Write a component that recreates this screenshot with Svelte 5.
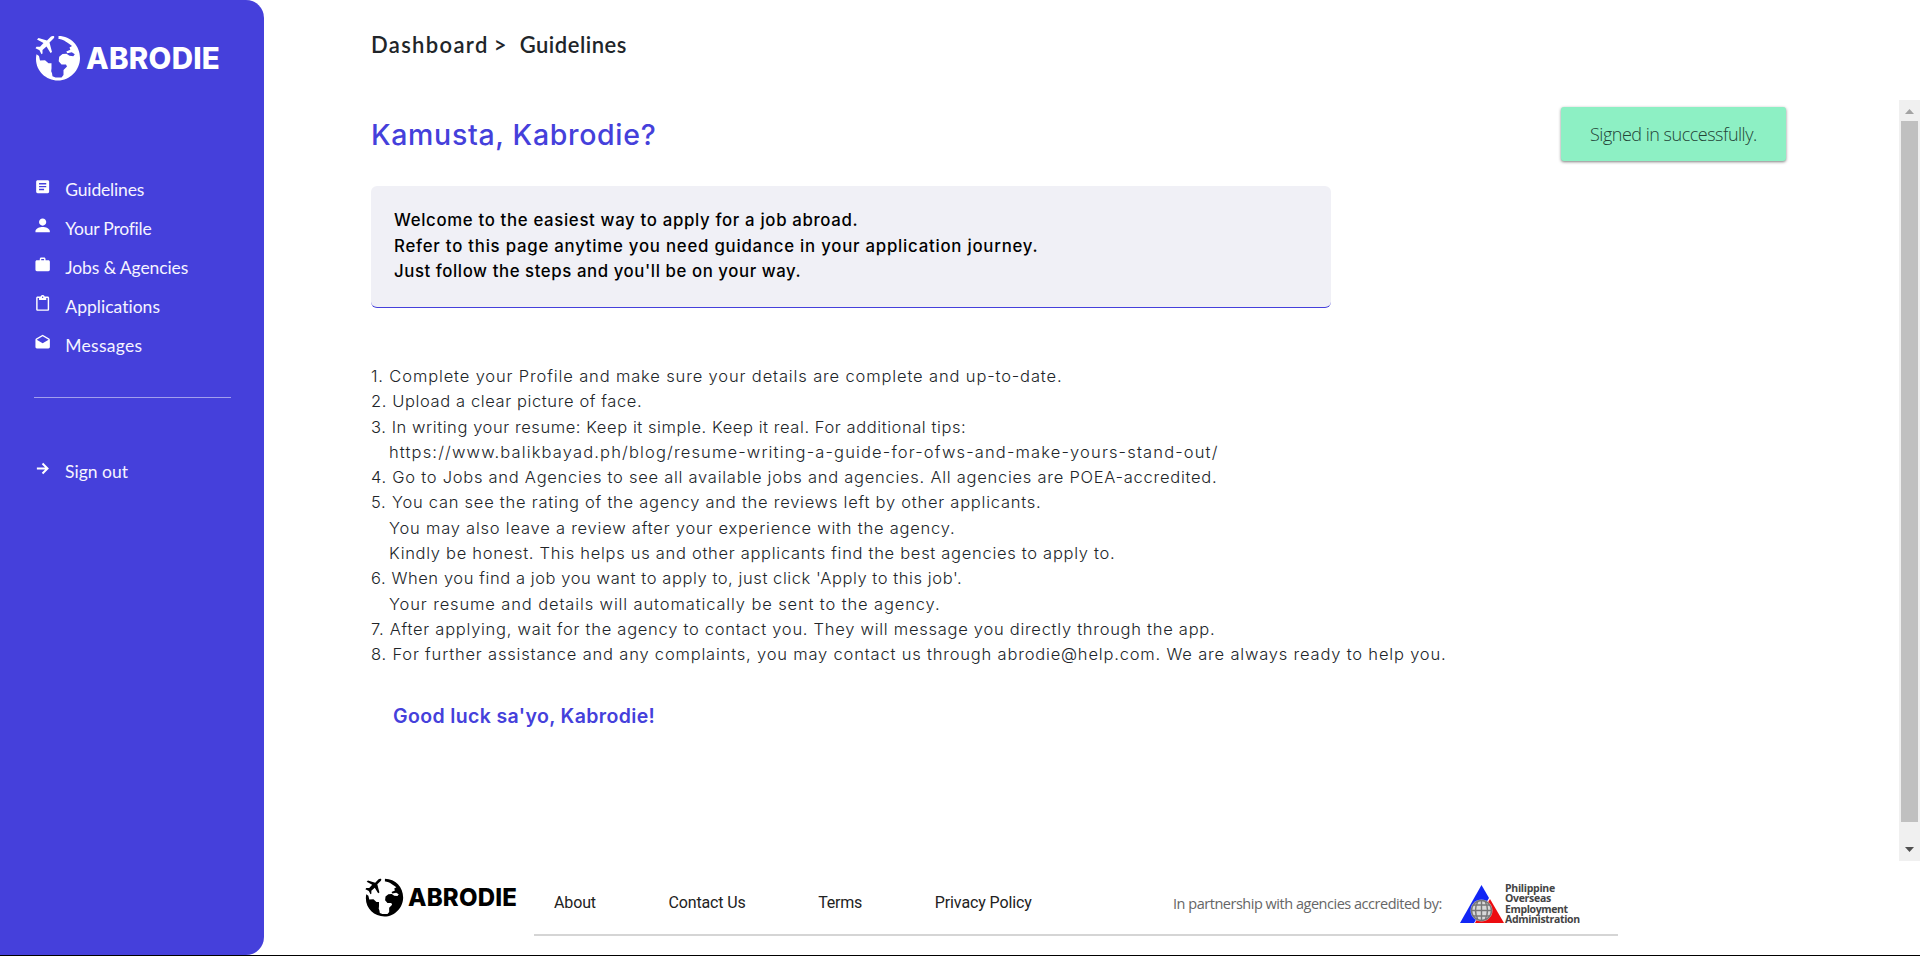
<script>
  const nav = [
    { t: 'Guidelines', w: 79, d: 'M19 3H5c-1.100 0-2 .9-2 2v14c0 1.100.9 2 2 2h14c1.100 0 2-.9 2-2V5c0-1.100-.9-2-2-2zm-5 14H7v-2h7v2zm3-4H7v-2h10v2zm0-4H7V7h10v2z' },
    { t: 'Your Profile', w: 86, d: 'M12 12c2.760 0 5-2.240 5-5s-2.240-5-5-5-5 2.240-5 5 2.240 5 5 5zm0 2c-4 0-10 2-10 6v1h20v-1c0-4-6-6-10-6z' },
    { t: 'Jobs & Agencies', w: 123, d: 'M20 6h-4V4c0-1.110-.89-2-2-2h-4c-1.110 0-2 .89-2 2v2H4c-1.110 0-2 .89-2 2v11c0 1.110.89 2 2 2h16c1.110 0 2-.89 2-2V8c0-1.110-.89-2-2-2zm-6 0h-4V4h4v2z' },
    { t: 'Applications', w: 95, d: 'M19 2h-4.180C14.400.84 13.300 0 12 0S9.600.84 9.180 2H5c-1.100 0-2 .9-2 2v16c0 1.100.9 2 2 2h14c1.100 0 2-.9 2-2V4c0-1.100-.9-2-2-2zm-7 0c.55 0 1 .45 1 1s-.45 1-1 1-1-.45-1-1 .45-1 1-1zm7 18H5V4h2v3h10V4h2v16z' },
    { t: 'Messages', w: 77, d: 'M22 8c0-.72-.37-1.350-.94-1.700L12 1 2.950 6.300C2.380 6.650 2 7.280 2 8v10c0 1.100.9 2 2 2h16c1.100 0 2-.9 2-2V8zm-10 5L3.740 7.840 12 3l8.260 4.840L12 13z' }
  ];
  const intro = [
    ['Welcome to the easiest way to apply for a job abroad.', 464],
    ['Refer to this page anytime you need guidance in your application journey.', 644],
    ["Just follow the steps and you'll be on your way.", 407]
  ];
  const steps = [
    ['1. Complete your Profile and make sure your details are complete and up-to-date.', 691],
    ['2. Upload a clear picture of face.', 271],
    ['3. In writing your resume: Keep it simple. Keep it real. For additional tips:', 595],
    ['https://www.balikbayad.ph/blog/resume-writing-a-guide-for-ofws-and-make-yours-stand-out/', 829, 1],
    ['4. Go to Jobs and Agencies to see all available jobs and agencies. All agencies are POEA-accredited.', 846],
    ['5. You can see the rating of the agency and the reviews left by other applicants.', 670],
    ['You may also leave a review after your experience with the agency.', 566, 1],
    ['Kindly be honest. This helps us and other applicants find the best agencies to apply to.', 726, 1],
    ["6. When you find a job you want to apply to, just click 'Apply to this job'.", 591],
    ['Your resume and details will automatically be sent to the agency.', 551, 1],
    ['7. After applying, wait for the agency to contact you. They will message you directly through the app.', 844],
    ['8. For further assistance and any complaints, you may contact us through abrodie@help.com. We are always ready to help you.', 1075]
  ];
  const links = [['About', 42], ['Contact Us', 77], ['Terms', 44], ['Privacy Policy', 97]];

  // Spreads the letters of a line so that it fills the given measure.
  function fit(node, width) {
    const apply = () => {
      node.style.letterSpacing = '0px';
      const natural = node.getBoundingClientRect().width;
      node.style.letterSpacing = (width - natural) / (node.textContent.length - 0.5) + 'px';
    };
    apply();
    document.fonts.ready.then(apply);
  }
</script>

{#snippet globe()}
  <svg class="globe" viewBox="0 0 46 46" aria-hidden="true">
    <path fill="currentColor" d="M23.500 1C36 1 45 11 45 23S35 45.500 23 45.500 1 36 1 24c0-1.700.2-3.200.5-4.700l2.500 1.700 1 4.400 5-.2 3.500 3h3v5l-.3 3 .8 2 .5 3 3 1.300h6l2-2.500 0-5 3.500-3.500-1-2h-4.500l-2.800-3.200.5-4.500 3.300-2.700 4-.3 3 2 3.800.5 1.500-2-3-2-4.500 1-1-1.700 4-1.800-.8-2.300 2.500-1.500-3-2.300C29 5 26 4 23.500 4z"/>
    <path fill="currentColor" d="M18.500 1c1 0 1 1.500 0 2.500l-4 4L17 17l-1.500 1-4-6.500-4 3.500v3.500l-1 .8-2-4-4-2 1-1.500h3.500l3.500-3.800L2 4.500 3.500 3 12 5.500l4-4c.7-.5 1.700-.8 2.500-.5z"/>
  </svg>
{/snippet}

<div class="page">
  <aside>
    <div class="brand">{@render globe()}<span class="word" use:fit={134}>ABRODIE</span></div>
    <nav>
      {#each nav as item}
        <a href="#top">
          <svg viewBox="0 0 24 24"><path fill="#fff" d={item.d} /></svg>
          <span use:fit={item.w}>{item.t}</span>
        </a>
      {/each}
    </nav>
    <hr />
    <a class="out" href="#top">
      <svg viewBox="0 0 24 24"><path fill="none" stroke="#fff" stroke-width="3.200" d="M3 12h17M12 4l8 8-8 8" /></svg>
      <span use:fit={63}>Sign out</span>
    </a>
  </aside>

  <div class="right">
    <header>
      <span use:fit={117}>Dashboard</span><span class="gt">&gt;</span><span use:fit={107}>Guidelines</span>
    </header>
    <div class="scroller">
      <main>
        <h1><span use:fit={285}>Kamusta, Kabrodie?</span></h1>
        <div class="intro">
          {#each intro as [t, w]}
            <p><span use:fit={w}>{t}</span></p>
          {/each}
        </div>
        <div class="steps">
          {#each steps as [t, w, sub]}
            <p class:sub><span use:fit={w}>{t}</span></p>
          {/each}
        </div>
        <h2><span use:fit={262}>Good luck sa'yo, Kabrodie!</span></h2>
      </main>
      <div class="bar">
        <svg viewBox="0 0 9 5"><path fill="#a3a3a3" d="M0 5 4.500 0 9 5z" /></svg>
        <div class="thumb"></div>
        <svg viewBox="0 0 9 5"><path fill="#505050" d="M0 0h9L4.500 5z" /></svg>
      </div>
    </div>
    <footer>
      <div class="brand small">{@render globe()}<span class="word" use:fit={109}>ABRODIE</span></div>
      <div class="foot">
        <div class="links">
          {#each links as [t, w]}<a href="#top" style:width="{w}px"><span use:fit={w}>{t}</span></a>{/each}
        </div>
        <span class="partner"><span use:fit={269}>In partnership with agencies accredited by:</span></span>
        <svg class="seal" viewBox="0 0 44 39">
          <path fill="#1226f5" d="M21.500 0 29 13 14 38H0z" />
          <path fill="#ec0c10" d="M30 14 44 38H15l2-4z" />
          <circle cx="21.500" cy="25.500" r="11" fill="#fff" opacity=".6" />
          <circle cx="21.500" cy="25.500" r="10" fill="#d8d8d8" stroke="#777" stroke-width="1.500" />
          <path fill="none" stroke="#777" stroke-width="1.400" d="M21.500 15.500v20M11.500 25.500h20M13 20h17M13 31h17M18 16q-5 9.500 0 19M25 16q5 9.500 0 19" />
        </svg>
        <div class="poea">
          <span use:fit={50}>Philippine</span><span use:fit={46}>Overseas</span><span use:fit={63}>Employment</span><span use:fit={75}>Administration</span>
        </div>
      </div>
    </footer>
  </div>
  <div class="toast"><span use:fit={167}>Signed in successfully.</span></div>
</div>

<style>
  :global(body) { background: #fff; overflow: hidden; }
  .page { display: flex; position: relative; width: 1920px; height: 956px; box-sizing: border-box; border-bottom: 1px solid #000; font-family: Lato, sans-serif; overflow: hidden; }
  span { white-space: nowrap; }
  a { color: inherit; text-decoration: none; }
  p, h1, h2 { margin: 0; }
  aside { width: 264px; box-sizing: border-box; padding: 35px 34px 0 35px; background: #4540db; color: #fff; border-radius: 0 18px 18px 0; }
  .brand { display: flex; align-items: center; height: 46px; }
  .globe { width: 46px; height: 46px; flex: none; }
  .word { font: 800 29.500px/46px Inter, sans-serif; margin-left: 5px; }
  nav { display: flex; flex-direction: column; margin-top: 88px; }
  nav a, .out { display: flex; height: 39px; align-items: center; font-size: 17.500px; color: #f5f4ff; }
  nav span, .out span { padding-top: 1px; }
  nav svg, .out svg { width: 17.300px; height: 17.300px; margin: -3px 14px 0 -1px; flex: none; }
  .out svg { width: 15px; height: 15px; margin: -5px 15px 0 0; }
  hr { border: 0; height: 1px; background: #a29fed; margin: 33px -1px 0; }
  .out { margin-top: 53px; }
  .right { flex: 1; display: flex; flex-direction: column; min-width: 0; }
  header { height: 100px; box-sizing: border-box; padding: 30px 0 0 107px; display: flex; font-size: 22px; line-height: 29px; font-weight: 600; color: #212529; }
  .gt { margin: 0 12px 0 5px; width: 14px; }
  .scroller { height: 761px; display: flex; justify-content: space-between; }
  main { padding-left: 107px; font-family: Inter, sans-serif; }
  h1 { margin-top: 17px; font-size: 28.500px; line-height: 36px; font-weight: 500; color: #4540db; }
  .intro { width: 960px; height: 122px; box-sizing: border-box; margin-top: 33px; padding: 22px 23px 0; background: #f0f0f6; border-bottom: 1px solid #4540db; border-radius: 6px; font-size: 16.800px; line-height: 25.500px; font-weight: 500; color: #000; }
  .steps { margin-top: 56px; font-size: 16.500px; line-height: 25.300px; font-weight: 300; color: #212529; }
  .sub { padding-left: 18px; }
  h2 { margin: 34px 0 0 22px; font-size: 19.500px; line-height: 28px; font-weight: 600; color: #4540db; }
  .bar { width: 21px; background: #f0f0f0; display: flex; flex-direction: column; align-items: center; }
  .bar svg { width: 9px; height: 5px; margin: 9px 0 7px; }
  .thumb { width: 17px; height: 701px; background: #c0c0c0; }
  .bar svg:last-child { margin-top: 25px; }
  footer { height: 94px; display: flex; padding-left: 101px; }
  .small { color: #000; height: 39px; margin-top: 17px; width: 169px; }
  .small .globe { width: 39px; height: 39px; }
  .small .word { font-size: 24px; line-height: 39px; margin-left: 4px; }
  .foot { width: 1084px; height: 73px; display: flex; border-bottom: 2px solid #d5d5d5; }
  .links { display: flex; gap: 72.600px; margin: 32px 0 0 20px; width: 619px; font: 16px/20px Roboto, sans-serif; color: #222; }
  .partner { width: 287px; margin-top: 33px; font: 400 14.500px/20px "Open Sans", sans-serif; color: #666; }
  .seal { width: 44px; height: 39px; margin-top: 24px; flex: none; }
  .poea { display: flex; flex-direction: column; align-items: flex-start; margin: 22px 0 0 1px; font: 700 10.500px/10.400px "Open Sans", sans-serif; color: #444; }
  .toast { position: absolute; left: 1561px; top: 107px; width: 225px; height: 54px; box-sizing: border-box; padding-left: 29px; background: #8df0c4; border-radius: 3px; box-shadow: 0 1px 3px rgba(0,0,0,.5); font: 300 18px/55px "Open Sans", sans-serif; color: #234437; }
</style>
